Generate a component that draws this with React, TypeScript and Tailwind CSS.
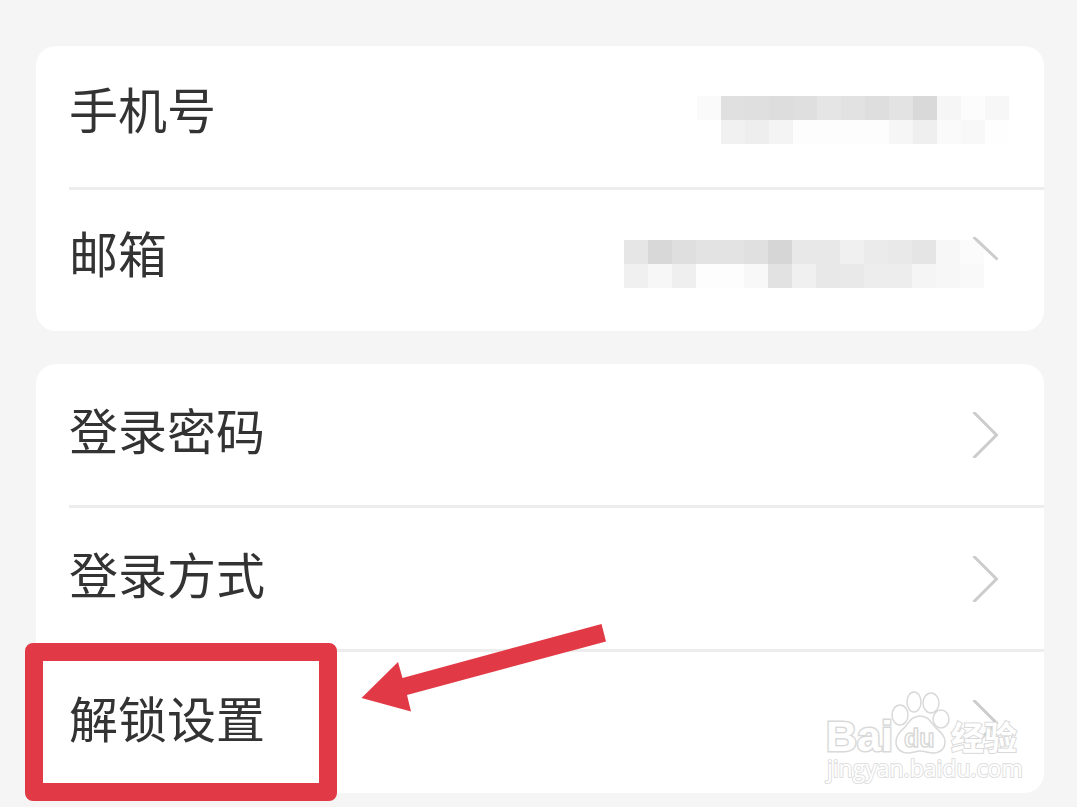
import clsx from 'clsx';

interface RowProps {
  label: string;
  compact?: boolean;
  last?: boolean;
  mosaic?: string[][];
  arrow?: 'full' | 'upper' | 'none';
}

const CELL = 24;

const phoneMosaic = [
  ['#fafafa', '#e0e0e0', '#dfdfdf', '#dddddd', '#dfdfdf', '#e5e5e5', '#e2e2e2', '#dedede', '#e3e3e3', '#d9d9d9', '#f6f6f6', '#fcfcfc', '#f7f7f7'],
  ['#ffffff', '#f1f1f1', '#eeeeee', '#f4f4f4', '#fdfdfd', '#fdfdfd', '#fdfdfd', '#fdfdfd', '#f6f6f6', '#efefef', '#fafafa', '#f8f8f8', '#fefefe'],
];

const mailMosaic = [
  ['#e6e6e6', '#d8d8d8', '#dfdfdf', '#e3e3e3', '#e3e3e3', '#e0e0e0', '#d6d6d6', '#e8e8e8', '#e8e8e8', '#f0f0f0', '#ebebeb', '#e9e9e9', '#e5e5e5', '#f7f7f7', '#fbfbfb'],
  ['#f0f0f0', '#f7f7f7', '#efefef', '#fdfdfd', '#fdfdfd', '#f8f8f8', '#e2e2e2', '#f0f0f0', '#e8e8e8', '#e9e9e9', '#ededed', '#ededed', '#f5f5f5', '#f7f7f7', '#f9f9f9'],
];

function Mosaic({ cells, className }: { cells: string[][]; className?: string }) {
  const width = cells[0].length * CELL;
  return (
    <svg
      className={clsx('mt-2 shrink-0', className)}
      width={width}
      height={CELL * 2}
      viewBox={`0 0 ${width} ${CELL * 2}`}
      shapeRendering="crispEdges"
      aria-hidden="true"
    >
      {cells.map((line, y) =>
        line.map((fill, x) => (
          <rect key={`${x}-${y}`} x={x * CELL} y={y * CELL} width={CELL} height={CELL} fill={fill} />
        ))
      )}
    </svg>
  );
}

function Chevron({ upperOnly }: { upperOnly?: boolean }) {
  return (
    <svg className="shrink-0" width="27" height="46" viewBox="0 0 27 46" fill="none" stroke="#cccccc" strokeWidth="3" aria-hidden="true">
      <path d={upperOnly ? 'M1.5 0L25.5 22.500' : 'M1.5 0L24.5 23L1.5 46'} />
    </svg>
  );
}

function Row({ label, compact, last, mosaic, arrow = 'full' }: RowProps) {
  return (
    <li className={clsx(!last && 'border-b-[3px] border-[#ededed]')}>
      <button
        type="button"
        className={clsx(
          'flex w-full items-center justify-between text-left',
          compact ? 'pt-[25px] pb-[43px]' : 'pt-7 pb-10',
          arrow === 'none' ? 'pr-[35px]' : 'pr-[45px]'
        )}
      >
        <span className="text-[49px] leading-[73px]">{label}</span>
        <span className={clsx('flex items-center', compact ? 'pt-4' : 'pt-3')}>
          {mosaic && <Mosaic cells={mosaic} className={arrow === 'none' ? '' : '-mr-3'} />}
          {arrow !== 'none' && <Chevron upperOnly={arrow === 'upper'} />}
        </span>
      </button>
    </li>
  );
}

function Watermark() {
  return (
    <svg
      className="pointer-events-none absolute right-5 bottom-2 overflow-visible"
      width="200"
      height="96"
      viewBox="824 689 200 96"
      fill="#ffffff"
      stroke="#d9d9d9"
      strokeWidth="1.5"
      aria-label="Baidu 经验"
    >
      <g className="font-['Liberation_Sans',Arial,sans-serif] font-bold" style={{ paintOrder: 'stroke' }} strokeWidth="3">
        <text x="826" y="751" fontSize="43">Bai</text>
        <text x="951" y="750" fontSize="33" strokeWidth="2" className="font-['Noto_Sans_CJK_SC',sans-serif]">经验</text>
      </g>
      <ellipse cx="900" cy="715" rx="8" ry="10" />
      <ellipse cx="914" cy="702" rx="7" ry="10" />
      <ellipse cx="931" cy="703" rx="8" ry="10" />
      <ellipse cx="941" cy="719" rx="8" ry="9" />
      <path d="M920 716C912 716 909 722 905 727C900 732 896 735 896 742C896 749 901 753 908 753C913 753 916 751 920 751C925 751 928 753 933 753C940 753 945 749 945 742C945 735 940 732 935 727C931 722 928 716 920 716Z" />
      <text x="904" y="747" fontSize="25" className="font-['Liberation_Sans',Arial,sans-serif] font-bold">du</text>
      <text x="827" y="777" fontSize="23" stroke="#e0e0e0" strokeWidth="2" style={{ paintOrder: 'stroke' }} className="font-['Open_Sans',sans-serif]">
        jingyan.baidu.com
      </text>
    </svg>
  );
}

export default function App() {
  return (
    <main className="flex min-h-screen flex-col gap-[33px] overflow-hidden bg-[#f5f5f5] pt-[46px] pr-[33px] pb-[14px] pl-9 font-['Noto_Sans_CJK_SC',sans-serif] text-[#333333]">
      <ul className="rounded-[20px] bg-white pl-[33px]">
        <Row label="手机号" compact mosaic={phoneMosaic} arrow="none" />
        <Row label="邮箱" compact last mosaic={mailMosaic} arrow="upper" />
      </ul>

      <ul className="relative rounded-[20px] bg-white pl-[33px]">
        <Row label="登录密码" />
        <Row label="登录方式" />
        <Row label="解锁设置" last />

        {/* Highlight around the last entry */}
        <li aria-hidden="true" className="pointer-events-none absolute -bottom-2 -left-[11px] h-[158px] w-[312px] rounded-lg border-[18px] border-[#e13a46]" />
        <li aria-hidden="true" className="pointer-events-none absolute bottom-20 left-[325px]">
          <svg width="246" height="89" viewBox="361 624 246 89" fill="#e13a46">
            <path d="M361.500 698L398 662L402.500 678L601.500 624L606 641.500L407 695L411 711.500Z" />
          </svg>
        </li>
        <li>
          <Watermark />
        </li>
      </ul>
    </main>
  );
}
